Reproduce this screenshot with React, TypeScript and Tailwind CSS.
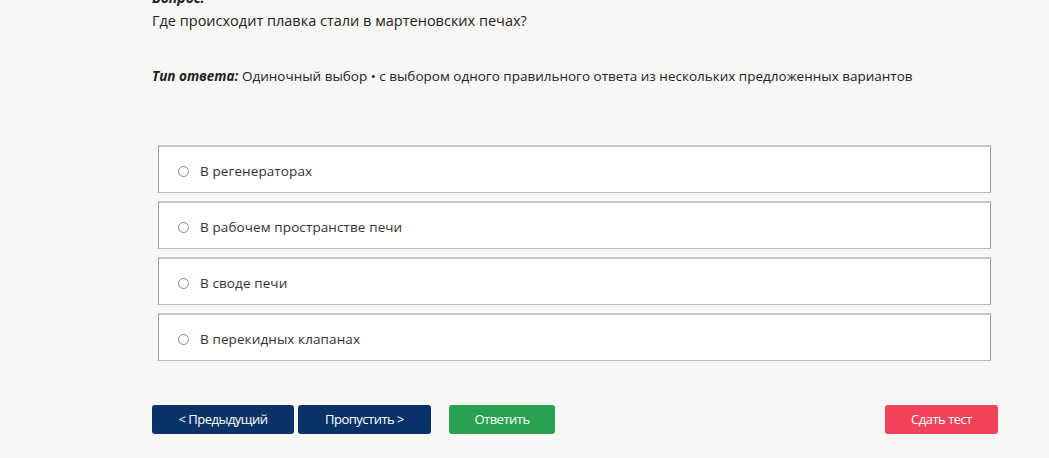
const options = [
  'В регенераторах',
  'В рабочем пространстве печи',
  'В своде печи',
  'В перекидных клапанах',
];

export default function App() {
  return (
    <div className="w-[1049px] h-[458px] overflow-hidden bg-[#f8f7f5] font-['Open_Sans',sans-serif] text-[#222]">
      <div className="pl-[152px] pr-[58px] -mt-[12px]">
        <div className="text-[14px] font-bold italic leading-[20px] text-[#222]">Вопрос:</div>
        <div className="text-[14.5px] leading-[22px] mt-[2px]">Где происходит плавка стали в мартеновских печах?</div>
        <div className="text-[13.5px] leading-[20px] mt-[34px]">
          <span className="font-bold italic">Тип ответа:</span> Одиночный выбор • с выбором одного правильного ответа из нескольких предложенных вариантов
        </div>

        <div className="ml-[6px] w-[833px] mt-[59px] flex flex-col gap-[8px]">
          {options.map((o) => (
            <label
              key={o}
              className="h-[48px] flex items-center bg-white border border-x-[#9a9a9a] border-t-2 border-t-[#c6c6c6] border-b-[#b8b8b8] pl-[19px] pt-[3px]"
            >
              <span className="w-[11px] h-[11px] rounded-full border border-[#8a8a8a] bg-white shrink-0" />
              <span className="ml-[11px] text-[13.5px] tracking-[0.1px] text-[#333]">{o}</span>
            </label>
          ))}
        </div>

        <div className="flex items-center mt-[44px]">
          <button className="w-[142px] h-[29px] rounded-[3px] bg-[#0a3266] text-white text-[13px] font-medium tracking-[-0.5px]">
            &lt; Предыдущий
          </button>
          <button className="ml-[4px] w-[133px] h-[29px] rounded-[3px] bg-[#0a3266] text-white text-[13px] font-medium tracking-[-0.5px]">
            Пропустить &gt;
          </button>
          <button className="ml-[18px] w-[106px] h-[29px] rounded-[3px] bg-[#28a150] text-white text-[13px] font-medium tracking-[-0.5px]">
            Ответить
          </button>
          <button className="ml-auto mr-[-7px] w-[113px] h-[29px] rounded-[3px] bg-[#f2435a] text-white text-[13px] font-medium tracking-[-0.5px]">
            Сдать тест
          </button>
        </div>
      </div>
    </div>
  );
}
